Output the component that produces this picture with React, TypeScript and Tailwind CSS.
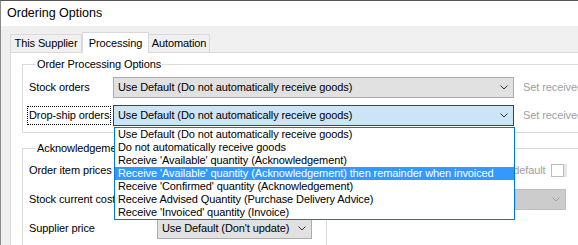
import React from 'react';

const FONT = "font-['Liberation_Sans',Arial,sans-serif]";

const OPTIONS = [
  'Use Default (Do not automatically receive goods)',
  'Do not automatically receive goods',
  "Receive 'Available' quantity (Acknowledgement)",
  "Receive 'Available' quantity (Acknowledgement) then remainder when invoiced",
  "Receive 'Confirmed' quantity (Acknowledgement)",
  'Receive Advised Quantity (Purchase Delivery Advice)',
  "Receive 'Invoiced' quantity (Invoice)",
];

function Chevron({ color = '#333' }: { color?: string }) {
  return (
    <svg width="8" height="5" viewBox="0 0 8 5" className="shrink-0">
      <polyline points="0.5,0.5 4,4 7.5,0.5" fill="none" stroke={color} strokeWidth="1" />
    </svg>
  );
}

function Combo({ text, width, focused }: { text: string; width: string; focused?: boolean }) {
  return (
    <div
      className={`${width} h-[21px] shrink-0 flex items-center justify-between pl-[4px] pr-[5px] border ${
        focused ? 'bg-[#cce4f7] border-[#005499]' : 'bg-[#e1e1e1] border-[#adadad]'
      }`}
    >
      <span className="whitespace-nowrap">{text}</span>
      <Chevron />
    </div>
  );
}

export default function App() {
  return (
    <div className={`${FONT} text-[11px] tracking-[-0.1px] text-black w-[578px] h-[245px] overflow-hidden relative bg-[#f0f0f0] border-t border-[#555] border-l border-l-[#8a8a8a] whitespace-nowrap`}>
      <div className="h-[25px] bg-white pl-[6px] flex items-center text-[12.5px] tracking-normal">Ordering Options</div>

      <div className="pl-[9px] pt-[6px]">
        {/* tabs */}
        <div className="flex items-end h-[20px] relative z-10">
          <div className="w-[72px] h-[18px] border border-b-0 border-[#d9d9d9] flex items-center justify-center">This Supplier</div>
          <div className="w-[67px] h-[21px] -mb-[1px] bg-white border border-b-0 border-[#d9d9d9] flex items-center justify-center">Processing</div>
          <div className="w-[61px] h-[18px] border border-b-0 border-l-0 border-[#d9d9d9] flex items-center justify-center">Automation</div>
        </div>

        {/* panel */}
        <div className="w-[600px] h-[200px] bg-white border-t border-l border-[#d9d9d9] pl-[11px] pt-[3px]">
          <fieldset className="w-[600px] border border-[#dcdcdc] pl-[6px] pb-[6px]">
            <legend className="ml-[7px] px-[1px] leading-[16px]">Order Processing Options</legend>
            <div className="flex flex-col gap-[7px] mt-[5px]">
              <div className="flex items-center">
                <span className="w-[84px] shrink-0">Stock orders</span>
                <Combo text={OPTIONS[0]} width="w-[401px]" />
                <span className="ml-[9px] text-[#a0a0a0]">Set received</span>
              </div>
              <div className="flex items-center">
                <div className="w-[84px] shrink-0 flex items-center">
                  <span className="-ml-[2px] h-[19px] px-[1px] flex items-center border border-dotted border-black">Drop-ship orders</span>
                </div>
                <Combo text={OPTIONS[0]} width="w-[401px]" focused />
                <span className="ml-[9px] text-[#a0a0a0]">Set received</span>
              </div>
            </div>
          </fieldset>

          <fieldset className="w-[600px] mt-[7px] border border-[#dcdcdc] pl-[6px] pb-[6px]">
            <legend className="ml-[7px] px-[1px] leading-[16px]">Acknowledgement</legend>
            <div className="flex flex-col gap-[8px] mt-[4px]">
              <div className="flex items-center h-[21px]">
                <span className="w-[128px] shrink-0">Order item prices</span>
                <span className="ml-[334px] text-[#a0a0a0]">Use default</span>
                <div className="ml-[5px] w-[13px] h-[13px] border border-[#bcbcbc] bg-white" />
                <div className="w-[3px] h-[13px] bg-[#e6e6e6]" />
              </div>
              <div className="flex items-center h-[21px]">
                <span className="w-[128px] shrink-0">Stock current cost</span>
                <div className="ml-[358px] w-[51px] h-[21px] bg-[#cccccc] border border-[#bfbfbf] flex items-center justify-end pr-[5px]">
                  <Chevron color="#a0a0a0" />
                </div>
              </div>
              <div className="flex items-center h-[21px]">
                <span className="w-[128px] shrink-0">Supplier price</span>
                <Combo text="Use Default (Don't update)" width="w-[155px]" />
                <div className="ml-[14px] w-px h-[30px] bg-[#dcdcdc] self-start" />
              </div>
            </div>
          </fieldset>
        </div>
      </div>

      {/* open dropdown list */}
      <div className="absolute left-[113px] top-[126px] w-[401px] h-[93px] border border-[#0078d7] bg-white z-20">
        {OPTIONS.map((o, i) => (
          <div
            key={i}
            className={`h-[13px] leading-[13px] pl-[3px] ${i === 3 ? 'bg-[#3399ff] text-white' : ''}`}
          >
            {o}
          </div>
        ))}
      </div>
    </div>
  );
}
